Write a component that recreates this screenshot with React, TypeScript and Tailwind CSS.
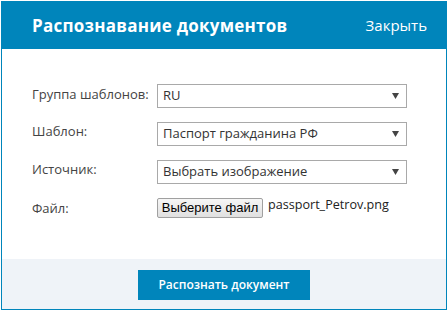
import React from "react";

const BLUE = "#0085bb";

function Arrow() {
  return (
    <svg width="7" height="6" viewBox="0 0 7 6" className="shrink-0">
      <polygon points="0,0 7,0 3.5,6" fill="#444" />
    </svg>
  );
}

function SelectBox({ value }: { value: string }) {
  return (
    <div className="flex h-[24px] w-[250px] items-center justify-between border border-[#a9a9a9] bg-white pl-[5px] pr-[7px] text-[13px] text-[#333]">
      <span>{value}</span>
      <Arrow />
    </div>
  );
}

function Row({ label, children, pt }: { label: string; children: React.ReactNode; pt: string }) {
  return (
    <div className="flex items-start">
      <div className={`w-[125px] text-[13px] text-[#444] ${pt}`}>{label}</div>
      {children}
    </div>
  );
}

export default function App() {
  return (
    <div
      className="h-[311px] w-[448px] bg-white p-px"
      style={{ fontFamily: '"Open Sans", "Noto Sans", sans-serif' }}
    >
      <div className="flex h-full flex-col border border-[#0085bb]">
        <div className="flex h-[47px] items-center justify-between bg-[#0085bb] pl-[30px] pr-[19px] text-white">
          <div className="text-[17px] font-bold tracking-[0.25px]">Распознавание документов</div>
          <div className="text-[15px]">Закрыть</div>
        </div>
        <div className="flex h-[210px] flex-col gap-[14px] bg-white pl-[30px] pt-[35px]">
          <Row label="Группа шаблонов:" pt="pt-[1px]">
            <SelectBox value="RU" />
          </Row>
          <Row label="Шаблон:" pt="pt-0">
            <SelectBox value="Паспорт гражданина РФ" />
          </Row>
          <Row label="Источник:" pt="pt-0">
            <SelectBox value="Выбрать изображение" />
          </Row>
          <Row label="Файл:" pt="pt-[1px]">
            <div className="flex items-start">
              <div
                className="flex h-[20px] w-[106px] items-center justify-center rounded-[2px] border border-[#a0a0a0] bg-gradient-to-b from-[#f6f6f6] to-[#e0e0e0] text-[13px] text-black"
                style={{ fontFamily: '"Liberation Sans", Arial, sans-serif' }}
              >
                Выберите файл
              </div>
              <span className="-mt-[2px] ml-[5px] text-[12.6px] text-[#222]">passport_Petrov.png</span>
            </div>
          </Row>
        </div>
        <div className="flex flex-1 justify-center bg-[#eff3f8] pt-[11px]">
          <div
            className="flex h-[30px] w-[172px] items-center justify-center text-[12px] font-semibold text-white"
            style={{ backgroundColor: BLUE }}
          >
            Распознать документ
          </div>
        </div>
      </div>
    </div>
  );
}
